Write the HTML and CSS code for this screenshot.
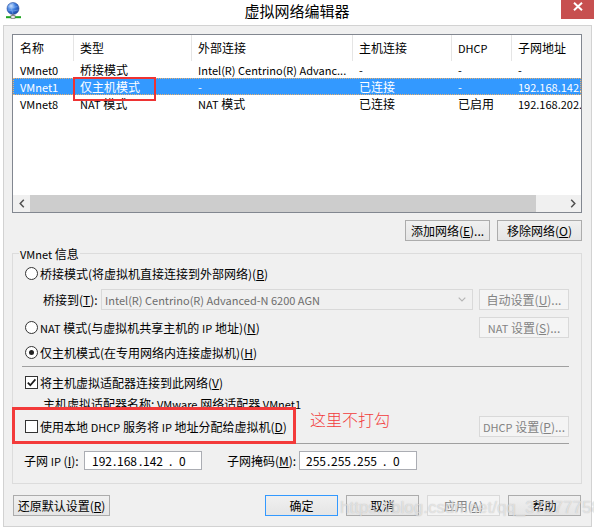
FILE: index.html
```html
<!DOCTYPE html>
<html lang="zh-CN">
<head>
<meta charset="utf-8">
<title>虚拟网络编辑器</title>
<link rel="stylesheet" href="styles.css">
</head>
<body>
<div class="window">
  <div class="titlebar">
    <div class="tb-left">
      <svg class="app-icon" width="16" height="17" viewBox="0 0 16 17">
        <defs>
          <radialGradient id="globe" cx="0.35" cy="0.3" r="0.8">
            <stop offset="0" stop-color="#cfe4ff"/>
            <stop offset="0.45" stop-color="#3f7fe0"/>
            <stop offset="1" stop-color="#173c96"/>
          </radialGradient>
        </defs>
        <circle cx="7" cy="6.5" r="6" fill="url(#globe)" stroke="#2a4f9e" stroke-width="0.6"/>
        <path d="M2.5 4.5 Q7 6.5 11.5 4.5 M2 8 Q7 10 12 8 M7 0.8 Q4 6.5 7 12.2" stroke="#9cc2f5" stroke-width="0.6" fill="none" opacity="0.7"/>
        <rect x="6.2" y="12" width="1.6" height="2.5" fill="#7a7a7a"/>
        <rect x="0" y="14.2" width="15" height="2" fill="#1fa31f"/>
        <rect x="5" y="13.6" width="4" height="3" fill="#e6e6e6" stroke="#6b6b6b" stroke-width="0.6"/>
      </svg>
    </div>
    <div class="title">虚拟网络编辑器</div>
    <div class="tb-right">
      <div class="close">
        <svg width="10" height="9" viewBox="0 0 10 9"><path d="M1 0.8 L9 8.2 M9 0.8 L1 8.2" stroke="#fff" stroke-width="2"/></svg>
      </div>
    </div>
  </div>

  <div class="client">
    <div class="listbox">
      <div class="grid header">
        <div class="cell">名称</div>
        <div class="cell">类型</div>
        <div class="cell">外部连接</div>
        <div class="cell">主机连接</div>
        <div class="cell"><span class="l">DHCP</span></div>
        <div class="cell last">子网地址</div>
      </div>
      <div class="grid row">
        <div class="cell"><span class="l">VMnet0</span></div>
        <div class="cell">桥接模式</div>
        <div class="cell"><span class="l">Intel(R) Centrino(R) Advanc...</span></div>
        <div class="cell"><span class="l">-</span></div>
        <div class="cell"><span class="l">-</span></div>
        <div class="cell"><span class="l">-</span></div>
      </div>
      <div class="grid row selected">
        <div class="cell"><span class="l">VMnet1</span></div>
        <div class="cell marked">仅主机模式</div>
        <div class="cell"><span class="l">-</span></div>
        <div class="cell">已连接</div>
        <div class="cell"><span class="l">-</span></div>
        <div class="cell"><span class="l">192.168.142.0</span></div>
      </div>
      <div class="grid row">
        <div class="cell"><span class="l">VMnet8</span></div>
        <div class="cell"><span class="l">NAT</span> 模式</div>
        <div class="cell"><span class="l">NAT</span> 模式</div>
        <div class="cell">已连接</div>
        <div class="cell">已启用</div>
        <div class="cell"><span class="l">192.168.202.0</span></div>
      </div>
      <div class="list-space"></div>
      <div class="hscroll">
        <div class="sb-btn"><svg width="6" height="9" viewBox="0 0 6 9"><path d="M4.8 0.8 L1.2 4.5 L4.8 8.2" stroke="#505050" stroke-width="1.5" fill="none"/></svg></div>
        <div class="sb-thumb"></div>
        <div class="sb-track"></div>
        <div class="sb-btn"><svg width="6" height="9" viewBox="0 0 6 9"><path d="M1.2 0.8 L4.8 4.5 L1.2 8.2" stroke="#505050" stroke-width="1.5" fill="none"/></svg></div>
      </div>
    </div>

    <div class="list-actions">
      <button class="btn w85">添加网络(<u>E</u>)...</button>
      <button class="btn w85">移除网络(<u>O</u>)</button>
    </div>

    <div class="group">
      <div class="legend"><span class="l">VMnet</span> 信息</div>

      <div class="g-row r-radio1">
        <span class="radio"></span><span>桥接模式(将虚拟机直接连接到外部网络)(<u>B</u>)</span>
      </div>

      <div class="g-row r-bridge">
        <span class="bridge-label">桥接到(<u>T</u>):</span>
        <div class="combo">
          <span class="combo-text l">Intel(R) Centrino(R) Advanced-N 6200 AGN</span>
          <svg class="combo-arrow" width="8" height="5" viewBox="0 0 8 5"><path d="M0.7 0.7 L4 4 L7.3 0.7" stroke="#b5b5b5" stroke-width="1.2" fill="none"/></svg>
        </div>
        <button class="btn disabled side">自动设置(<u>U</u>)...</button>
      </div>

      <div class="g-row r-nat">
        <span class="radio"></span><span><span class="l">NAT</span> 模式(与虚拟机共享主机的 <span class="l">IP</span> 地址)(<u>N</u>)</span>
        <button class="btn disabled side"><span class="l">NAT</span> 设置(<u>S</u>)...</button>
      </div>

      <div class="g-row r-host">
        <span class="radio on"></span><span>仅主机模式(在专用网络内连接虚拟机)(<u>H</u>)</span>
      </div>

      <div class="sep sep1"></div>

      <div class="g-row r-check">
        <span class="check"><svg width="11" height="11" viewBox="0 0 11 11"><path d="M1.8 5.6 L4.3 8.2 L9.4 2.4" stroke="#1a1a1a" stroke-width="1.7" fill="none"/></svg></span>
        <span>将主机虚拟适配器连接到此网络(<u>V</u>)</span>
      </div>

      <div class="g-row r-adapter">
        <span>主机虚拟适配器名称: <span class="l">VMware</span> 网络适配器 <span class="l">VMnet1</span></span>
      </div>

      <div class="g-row r-dhcp">
        <span class="check"></span>
        <span>使用本地 <span class="l">DHCP</span> 服务将 <span class="l">IP</span> 地址分配给虚拟机(<u>D</u>)</span>
        <button class="btn disabled side"><span class="l">DHCP</span> 设置(<u>P</u>)...</button>
      </div>

      <div class="sep sep2"></div>

      <div class="g-row r-subnet">
        <span class="ip-label">子网 <span class="l">IP</span> (<u>I</u>):</span>
        <div class="ipfield">
          <span class="oct o1">192</span><span class="dot">.</span><span class="oct o2">168</span><span class="dot">.</span><span class="oct o3">142</span><span class="dot d3">.</span><span class="oct">0</span>
        </div>
        <span class="mask-label">子网掩码(<u>M</u>):</span>
        <div class="ipfield">
          <span class="oct o1">255</span><span class="dot">.</span><span class="oct o2">255</span><span class="dot">.</span><span class="oct o3">255</span><span class="dot d3">.</span><span class="oct">0</span>
        </div>
      </div>
    </div>

    <div class="footer">
      <button class="btn w97">还原默认设置(<u>R</u>)</button>
      <button class="btn w73 default push">确定</button>
      <button class="btn w73">取消</button>
      <button class="btn w73 disabled">应用(<u>A</u>)</button>
      <button class="btn w73">帮助</button>
    </div>

    <div class="annot-box"></div>
    <div class="annot-text">这里不打勾</div>
    <div class="watermark">https://blog.csdn.net/qq_37277758</div>
  </div>
</div>
</body>
</html>
```

FILE: styles.css
```css
* { box-sizing: border-box; }

body {
  margin: 0;
  background: #ffffff;
  font-family: "Noto Sans CJK SC", "Noto Sans", sans-serif;
  font-size: 12px;
  color: #000;
}

.l { font-size: 11px; }

.window {
  width: 594px;
  height: 528px;
  background: #ffffff;
  overflow: hidden;
}

/* ---------- title bar ---------- */
.titlebar {
  height: 25px;
  display: grid;
  grid-template-columns: 1fr auto 1fr;
}
.tb-left { display: flex; }
.app-icon { margin: 2px 0 0 6px; }
.title {
  font-size: 15px;
  line-height: 22px;
  color: #000;
}
.tb-right { display: flex; justify-content: flex-end; }
.close {
  width: 33px;
  height: 19px;
  background: #c75050;
  display: flex;
  justify-content: center;
  padding-top: 2px;
}

/* ---------- client area ---------- */
.client {
  margin-left: 3px;
  width: 589px;
  height: 502px;
  border: 1px solid #d2d2d2;
  background: #f0f0f0;
  position: relative;
}

/* ---------- list view ---------- */
.listbox {
  margin: 8px 0 0 8px;
  width: 570px;
  height: 179px;
  border: 1px solid #828790;
  background: #fff;
  display: flex;
  flex-direction: column;
}
.grid {
  display: grid;
  grid-template-columns: 61px 118px 161px 99px 60px 69px;
}
.cell {
  white-space: nowrap;
  overflow: hidden;
  padding-left: 6px;
}
.cell:first-child { padding-left: 7px; }
.header { height: 26px; }
.header .cell {
  line-height: 26px;
  border-right: 1px solid #e5e5e5;
}
.header .cell.last { border-right: none; }
.row { height: 17px; line-height: 17px; }
.row .cell { overflow: visible; }
.row .cell:last-child { overflow: hidden; }
.selected {
  background: #3399ff;
  color: #fff;
  outline: 1px dotted #e9b070;
  outline-offset: -1px;
}
.marked { position: relative; }
.marked::after {
  content: "";
  position: absolute;
  left: -1px;
  top: -1px;
  width: 79px;
  height: 20px;
  border: 2px solid #ee3333;
}
.list-space { flex: 1; }
.hscroll {
  height: 17px;
  display: flex;
  background: #f0f0f0;
}
.sb-btn {
  width: 17px;
  display: flex;
  align-items: center;
  justify-content: center;
}
.sb-thumb {
  width: 506px;
  background: #cdcdcd;
}
.sb-track { flex: 1; }

/* ---------- buttons ---------- */
.btn {
  height: 21px;
  border: 1px solid #acacac;
  background: linear-gradient(#f0f0f0, #e5e5e5);
  font-family: inherit;
  font-size: 12px;
  line-height: 19px;
  padding: 0;
  margin: 0;
  color: #000;
  text-align: center;
  white-space: nowrap;
}
.btn.disabled {
  background: #f4f4f4;
  border-color: #d9d9d9;
  color: #838383;
}
.btn.default { border-color: #3399ff; }
.w85 { width: 85px; }
.w97 { width: 97px; }
.w73 { width: 73px; }

.list-actions {
  margin: 7px 0 0 8px;
  width: 570px;
  display: flex;
  justify-content: flex-end;
  gap: 7px;
}

/* ---------- group box ---------- */
.group {
  margin: 12px 0 0 8px;
  width: 570px;
  height: 231px;
  border: 1px solid #dcdcdc;
  position: relative;
  padding-right: 12px;
  display: flex;
  flex-direction: column;
}
.legend {
  position: absolute;
  top: -9px;
  left: 6px;
  padding: 0 1px;
  line-height: 17px;
  background: #f0f0f0;
}
.g-row {
  display: flex;
  align-items: center;
  white-space: nowrap;
}
.radio {
  width: 13px;
  height: 13px;
  border: 1px solid #333;
  border-radius: 50%;
  background: #fff;
  margin-right: 2px;
  flex: none;
  display: flex;
  align-items: center;
  justify-content: center;
}
.radio.on::after {
  content: "";
  width: 5px;
  height: 5px;
  border-radius: 50%;
  background: #222;
}
.check {
  width: 13px;
  height: 13px;
  border: 1px solid #333;
  background: #fff;
  margin-right: 2px;
  flex: none;
  display: flex;
  align-items: center;
  justify-content: center;
}
.side { width: 90px; margin-left: auto; }

.r-radio1 { margin-top: 10px; height: 18px; padding-left: 12px; }
.r-bridge { margin-top: 7px; height: 21px; padding-left: 30px; }
.r-nat { margin-top: 7px; height: 21px; padding-left: 12px; }
.r-host { margin-top: 5px; height: 18px; padding-left: 12px; }
.sep { height: 1px; background: #a0a0a0; margin-left: 9px; }
.sep1 { margin-top: 5px; }
.r-check { margin-top: 6px; height: 18px; padding-left: 12px; }
.r-adapter { margin-top: 4px; height: 16px; padding-left: 30px; }
.r-dhcp { margin-top: 5px; height: 21px; padding-left: 12px; }
.sep2 { margin-top: 6px; }
.r-subnet { margin-top: 7px; height: 19px; padding-left: 11px; }

.bridge-label { width: 58px; }
.combo {
  width: 372px;
  height: 21px;
  border: 1px solid #d9d9d9;
  background: #f0f0f0;
  color: #6d6d6d;
  display: flex;
  align-items: center;
  padding: 0 6px 0 3px;
}
.combo-text { flex: 1; }

.ip-label { width: 60px; }
.mask-label { width: 72px; margin-left: 25px; }
.ipfield {
  width: 118px;
  height: 19px;
  border: 1px solid #abadb3;
  background: #fff;
  display: flex;
  align-items: center;
  padding-left: 7px;
}
.ipfield + .mask-label + .ipfield { padding-left: 6px; }
.oct { text-align: left; }
.o1 { width: 21px; }
.o2 { width: 22px; }
.o3 { width: 26px; }
.dot { width: 4px; }
.d3 { width: 10px; }

/* ---------- footer ---------- */
.footer {
  margin: 11px 0 0 9px;
  width: 568px;
  display: flex;
  gap: 8px;
}
.push { margin-left: auto; }

/* ---------- overlays ---------- */
.annot-box {
  position: absolute;
  left: 8px;
  top: 381px;
  width: 284px;
  height: 37px;
  border: 3px solid #f33a3a;
}
.annot-text {
  position: absolute;
  left: 306px;
  top: 383px;
  font-size: 16px;
  line-height: 20px;
  color: #f23c3c;
  font-weight: 300;
}
.watermark {
  position: absolute;
  left: 336px;
  top: 472px;
  font-family: "Liberation Sans", Arial, sans-serif;
  font-size: 17px;
  line-height: 20px;
  color: rgba(255, 255, 255, 0.55);
  text-shadow: 0 0 1px rgba(110, 110, 110, 0.45);
  white-space: nowrap;
}
```
